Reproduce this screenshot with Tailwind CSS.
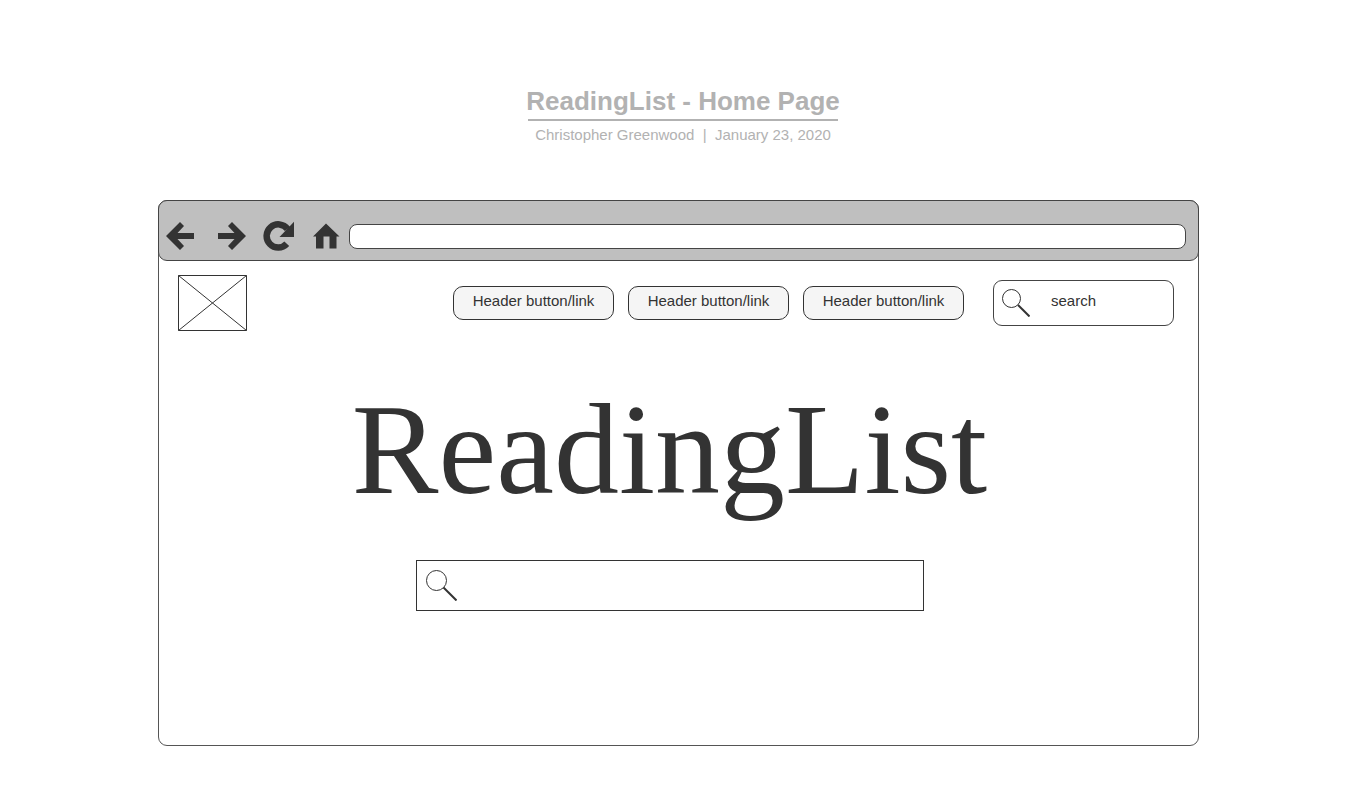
<!DOCTYPE html>
<html lang="en">
<head>
<meta charset="utf-8">
<meta name="viewport" content="width=device-width, initial-scale=1">
<title>ReadingList - Home Page</title>
<script src="https://cdn.jsdelivr.net/npm/@tailwindcss/browser@4"></script>
</head>
<body class="flex min-h-screen flex-col bg-white pt-[86px] pr-[161px] pb-12 pl-[158px] font-['Liberation_Sans',Arial,sans-serif] text-[15px] text-[#333333]">
  <header class="flex flex-col items-center pl-[9px] text-[#b2b2b2]">
    <h1 class="text-[26px] leading-[30px] font-bold whitespace-nowrap">ReadingList - Home Page</h1>
    <hr class="mt-[3px] w-[310px] border-t-2 border-[#b2b2b2]">
    <p class="mt-1 leading-5 whitespace-pre">Christopher Greenwood  |  January 23, 2020</p>
  </header>

  <div class="mt-[55px] flex grow flex-col rounded-[9px] border border-[#555555]">
    <nav aria-label="Browser" class="-mx-px -mt-px flex h-[61px] items-center rounded-[9px] border border-[#444444] bg-[#bfbfbf] pt-[11px] pr-3 pl-[7px]">
      <button type="button" aria-label="Back" class="w-[30px]">
        <svg class="block h-[30px] w-[30px]" viewBox="0 0 30 30" fill="#333333" aria-hidden="true"><path d="M0 15 14 1 18 5 11.500 12H28V18H11.500L18 25 14 29Z"/></svg>
      </button>
      <button type="button" aria-label="Forward" class="ml-[21px] w-[30px]">
        <svg class="block h-[30px] w-[30px]" viewBox="0 0 30 30" fill="#333333" aria-hidden="true"><path d="M29 15 15 1 11 5 17.500 12H1V18H17.500L11 25 15 29Z"/></svg>
      </button>
      <button type="button" aria-label="Reload" class="ml-4 w-8">
        <svg class="block h-[30px] w-8" viewBox="0 0 32 30" aria-hidden="true"><path d="M24.500 8A11.600 11.600 0 1 0 23.800 22.800" fill="none" stroke="#333333" stroke-width="6.500"/><path d="M31 .8V16H16.500Z" fill="#333333"/></svg>
      </button>
      <button type="button" aria-label="Home" class="ml-[18px] w-[27px]">
        <svg class="block h-[30px] w-[27px]" viewBox="0 0 27 30" fill="#333333" aria-hidden="true"><path d="M13 2.500 26.500 15.500H23.500V27.500H16.500V15.500H10.500V27.500H3V15.500H0Z"/></svg>
      </button>
      <input type="text" aria-label="Address" class="ml-[9px] h-[25px] min-w-0 grow rounded-lg border border-[#444444] bg-white px-3 outline-none">
    </nav>

    <div class="flex items-center pt-[14px] pr-6 pl-[19px]">
      <svg class="h-14 w-[69px] shrink-0" viewBox="0 0 69 56" fill="none" stroke="#333333" role="img" aria-label="Logo"><path d="M.5 .5H68.500V55.500H.5ZL68.500 55.500M68.500 .5.5 55.500"/></svg>
      <nav aria-label="Main" class="ml-auto flex gap-[14px]">
        <button type="button" class="h-[34px] w-[161px] rounded-[10px] border border-[#333333] bg-[#f5f5f5] pb-1">Header button/link</button>
        <button type="button" class="h-[34px] w-[161px] rounded-[10px] border border-[#333333] bg-[#f5f5f5] pb-1">Header button/link</button>
        <button type="button" class="h-[34px] w-[161px] rounded-[10px] border border-[#333333] bg-[#f5f5f5] pb-1">Header button/link</button>
      </nav>
      <label class="ml-[29px] flex h-[46px] w-[181px] items-center rounded-[9px] border border-[#444444] pl-2">
        <svg class="h-7 w-7 shrink-0" viewBox="0 0 28 28" fill="none" stroke="#333333" aria-hidden="true"><circle cx="9.500" cy="9.500" r="9"/><path d="M16 16 27.500 27.500" stroke-width="2"/></svg>
        <input type="search" aria-label="Search" placeholder="search" class="mb-1 ml-[21px] w-full min-w-0 outline-none placeholder:text-[#333333]">
      </label>
    </div>

    <main class="flex flex-col items-center pr-[18px]">
      <h2 class="mt-[43px] font-['Gentium_Book_Basic',Gentium,'Liberation_Serif',serif] text-[130px] leading-[150px]">ReadingList</h2>
      <label class="mt-9 flex h-[51px] w-[508px] max-w-full items-center border border-[#333333] pl-[9px]">
        <svg class="h-[31px] w-[31px] shrink-0" viewBox="0 0 31 31" fill="none" stroke="#333333" aria-hidden="true"><circle cx="10.500" cy="10.500" r="10"/><path d="M17.500 17.500 30.500 30.500" stroke-width="2"/></svg>
        <input type="search" aria-label="Search the reading list" class="ml-3 w-full min-w-0 outline-none">
      </label>
    </main>
  </div>
</body>
</html>
